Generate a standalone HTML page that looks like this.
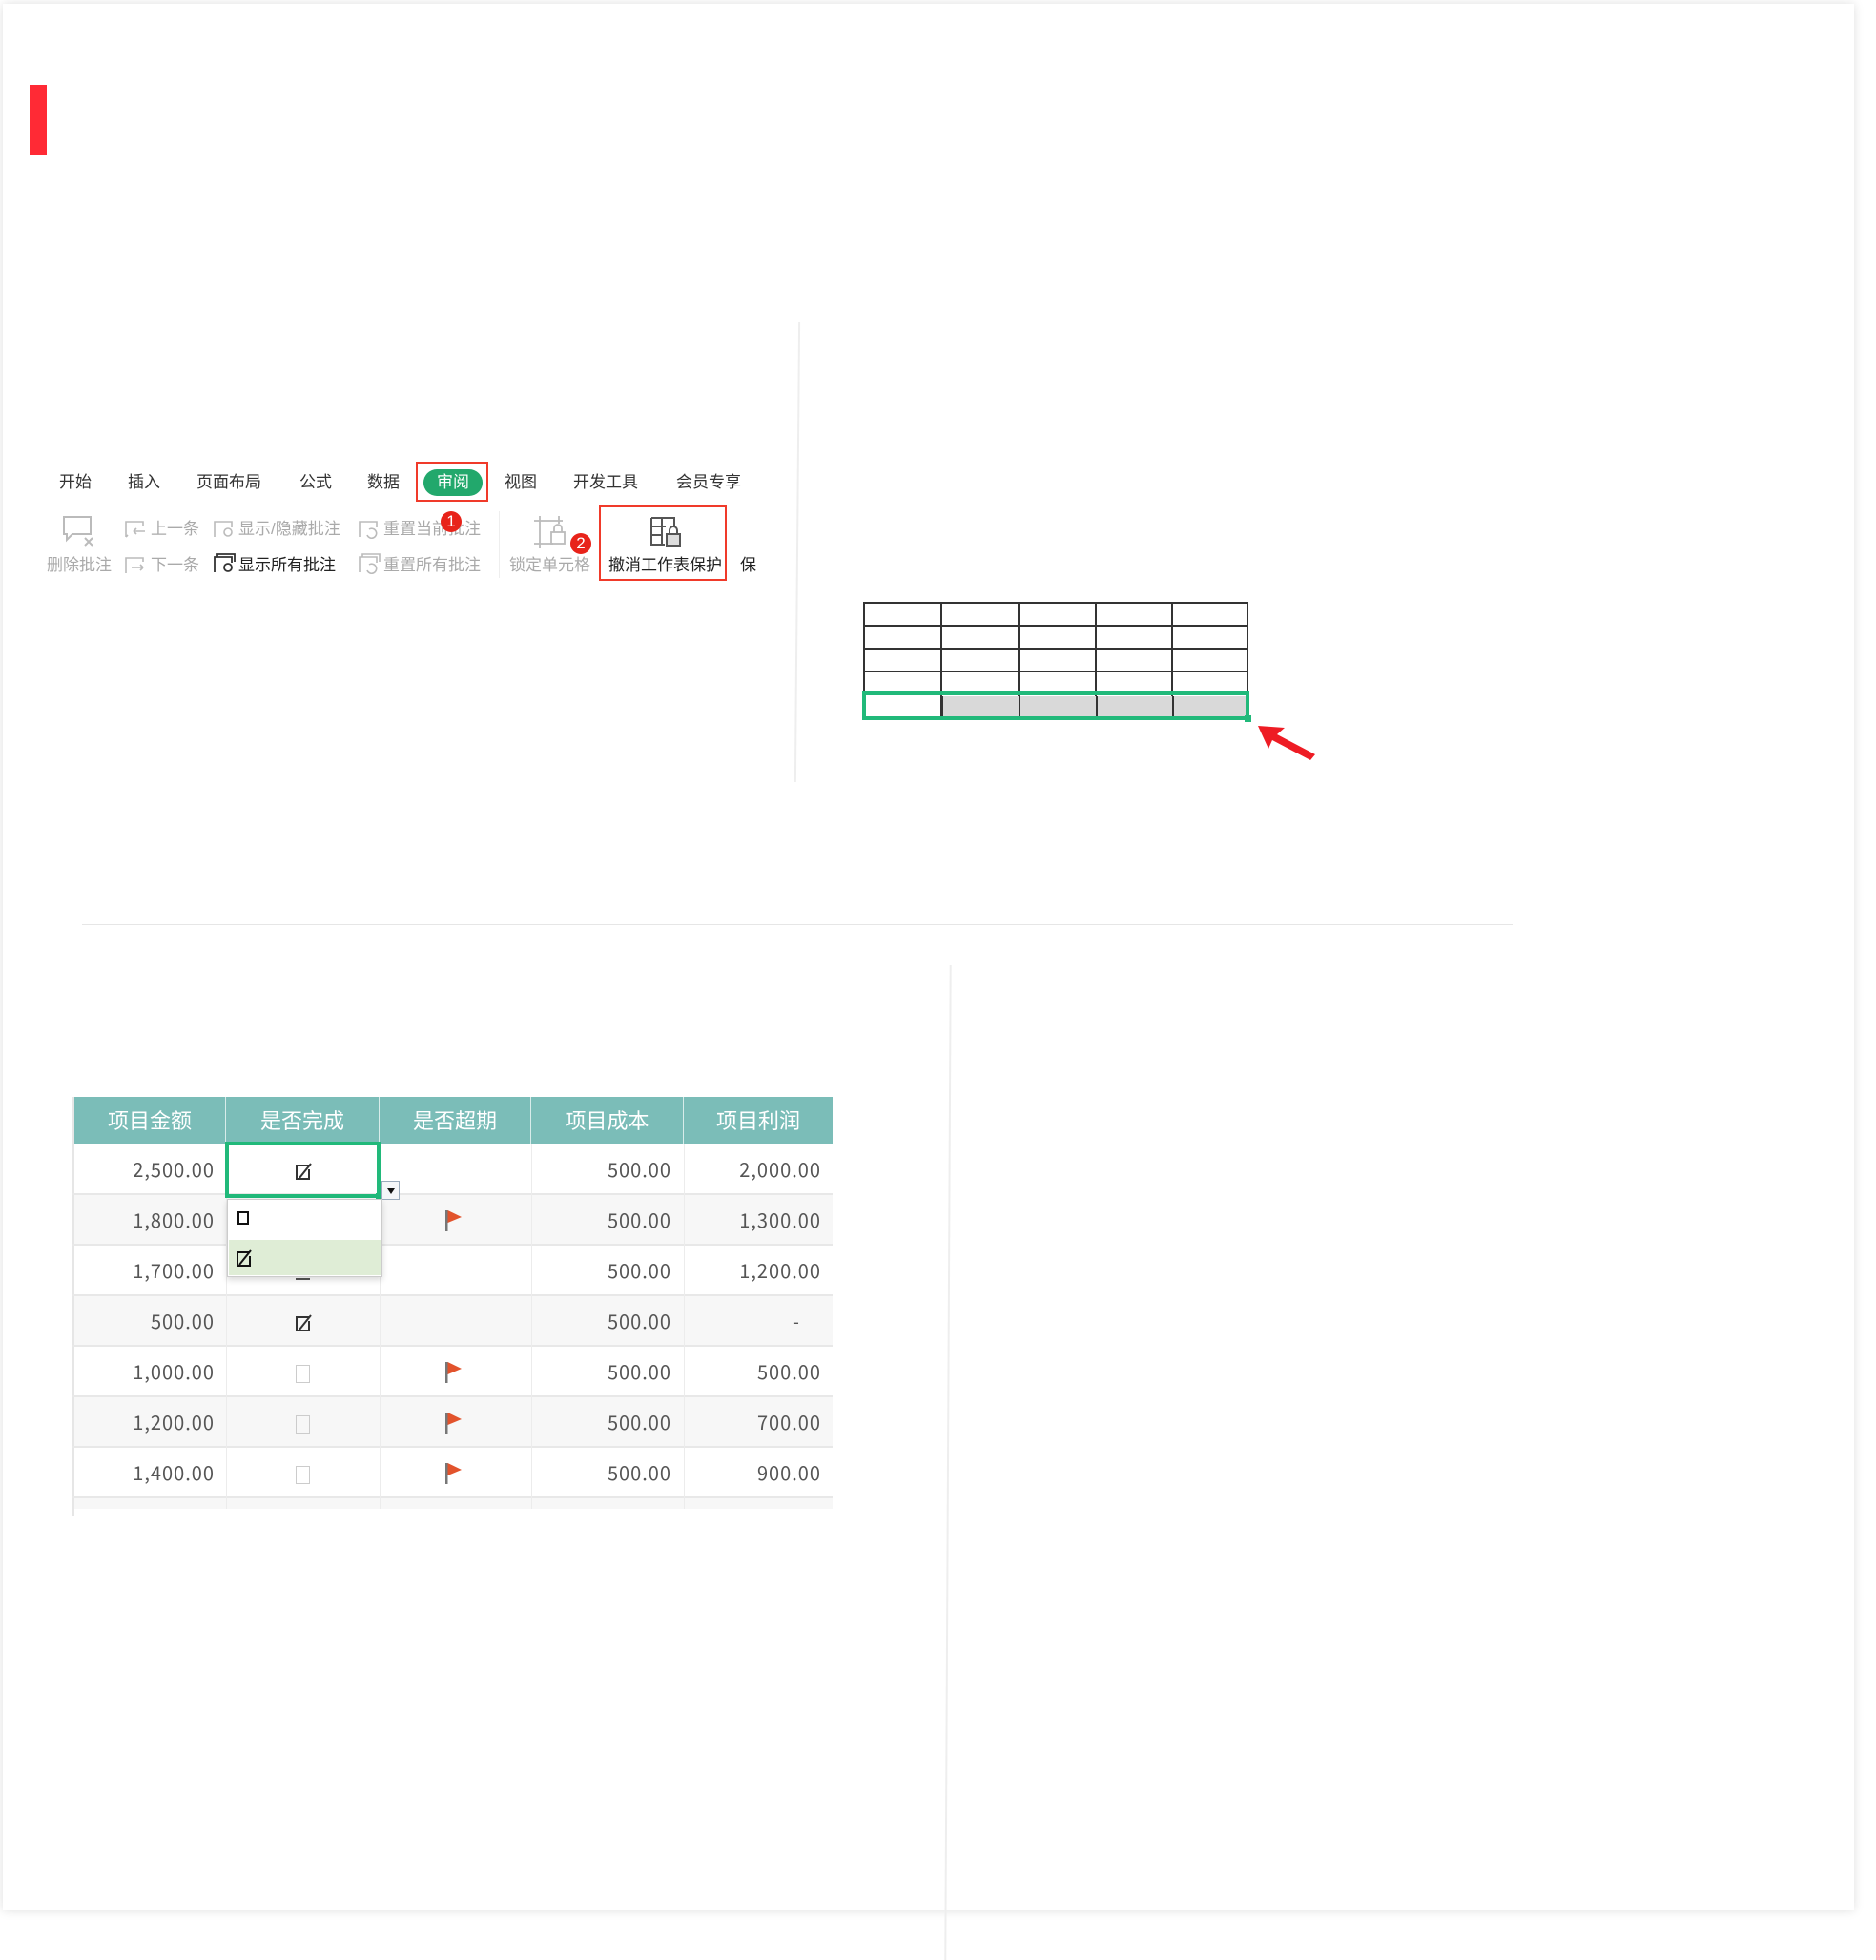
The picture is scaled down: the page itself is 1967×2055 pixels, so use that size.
<!DOCTYPE html>
<html><head><meta charset="utf-8"><style>
body{margin:0;width:1967px;height:2055px;background:#fff;position:relative;overflow:hidden;font-family:"Liberation Sans","Noto Sans CJK SC",sans-serif}
.a{position:absolute}
.card{left:3px;top:4px;width:1941px;height:1999px;background:#fff;box-shadow:0 0 10px rgba(0,0,0,.13)}
.t{position:absolute;font-size:17px;color:#333;white-space:nowrap;line-height:20px}
.g{color:#aaa}
.d{color:#222}
.th{position:absolute;top:1150px;height:49px;line-height:49px;text-align:center;color:#fff;font-size:22px;font-family:"Noto Sans CJK SC",sans-serif;border-right:1px solid #d8ecea}
.num{position:absolute;font-size:20px;color:#555;text-align:right;font-family:"Noto Sans CJK SC",sans-serif;letter-spacing:1px;line-height:53px;height:53px}
</style></head><body>
<div class="a card"></div>
<div class="a" style="left:31px;top:89px;width:18px;height:74px;background:#ff2a35"></div>
<div class="a" style="left:835px;top:338px;width:2px;height:482px;background:#eee;transform:skewX(-0.5deg)"></div>
<div class="a" style="left:86px;top:969px;width:1500px;height:1px;background:#e6e6e6"></div>
<div class="a" style="left:993px;top:1012px;width:2px;height:1043px;background:#eee;transform:skewX(-0.3deg)"></div>

<!-- ribbon tabs -->
<div class="t" style="left:62px;top:496px">开始</div>
<div class="t" style="left:134px;top:496px">插入</div>
<div class="t" style="left:206px;top:496px">页面布局</div>
<div class="t" style="left:314px;top:496px">公式</div>
<div class="t" style="left:385px;top:496px">数据</div>
<div class="a" style="left:436px;top:484px;width:76px;height:42px;border:2px solid #f03a2a;box-sizing:border-box"></div>
<div class="a" style="left:444px;top:492px;width:62px;height:28px;border-radius:14px;background:#22a86c;color:#fff;font-size:17px;line-height:28px;text-align:center">审阅</div>
<div class="t" style="left:529px;top:496px">视图</div>
<div class="t" style="left:601px;top:496px">开发工具</div>
<div class="t" style="left:709px;top:496px">会员专享</div>

<!-- ribbon buttons -->
<svg class="a" style="left:64px;top:540px" width="40" height="38" viewBox="0 0 40 38" fill="none" stroke="#bbb" stroke-width="2"><path d="M3 2h28v18H12l-6 6v-6H3z"/><path d="M25 24l8 8M33 24l-8 8"/></svg>
<div class="t g" style="left:49px;top:583px">删除批注</div>
<svg class="a" style="left:130px;top:545px" width="26" height="20" fill="none" stroke="#bbb" stroke-width="1.6"><path d="M2 18V2h18v4M4 16l-2 2M10 12h12M10 12l3-3M10 12l3 3"/></svg>
<div class="t g" style="left:158px;top:545px">上一条</div>
<svg class="a" style="left:130px;top:583px" width="26" height="20" fill="none" stroke="#bbb" stroke-width="1.6"><path d="M2 18V2h18v4M8 12h12M20 12l-3-3M20 12l-3 3"/></svg>
<div class="t g" style="left:158px;top:583px">下一条</div>
<svg class="a" style="left:223px;top:545px" width="26" height="20" fill="none" stroke="#bbb" stroke-width="1.6"><path d="M2 18V2h18v6"/><circle cx="16" cy="13" r="4"/></svg>
<div class="t g" style="left:250px;top:545px">显示/隐藏批注</div>
<svg class="a" style="left:223px;top:580px" width="26" height="22" fill="none" stroke="#333" stroke-width="1.8"><path d="M2 20V4h18v6M5 4V1h18v8"/><circle cx="16" cy="15" r="4"/></svg>
<div class="t d" style="left:250px;top:583px">显示所有批注</div>
<svg class="a" style="left:375px;top:545px" width="26" height="20" fill="none" stroke="#bbb" stroke-width="1.6"><path d="M2 18V2h18v6M10 16a5 5 0 1 0 2-6"/></svg>
<div class="t g" style="left:402px;top:545px">重置当前批注</div>
<svg class="a" style="left:375px;top:580px" width="26" height="22" fill="none" stroke="#bbb" stroke-width="1.6"><path d="M2 20V4h18v6M5 4V1h18v8M10 18a5 5 0 1 0 2-6"/></svg>
<div class="t g" style="left:402px;top:583px">重置所有批注</div>
<div class="a" style="left:523px;top:536px;width:1px;height:70px;background:#eee"></div>
<svg class="a" style="left:558px;top:540px" width="40" height="36" fill="none" stroke="#bbb" stroke-width="1.8"><path d="M2 6h30M2 30h20M8 1v34M28 1v8"/><rect x="20" y="18" width="14" height="12"/><path d="M23 18v-4a4 4 0 0 1 8 0v4"/></svg>
<div class="t g" style="left:534px;top:583px">锁定单元格</div>
<div class="a" style="left:462px;top:536px;width:22px;height:22px;border-radius:50%;background:#e8231a;color:#fff;font-size:17px;line-height:22px;text-align:center">1</div>
<div class="a" style="left:598px;top:559px;width:22px;height:22px;border-radius:50%;background:#e8231a;color:#fff;font-size:17px;line-height:22px;text-align:center">2</div>
<div class="a" style="left:628px;top:530px;width:134px;height:79px;border:2.5px solid #f03a2a;box-sizing:border-box"></div>
<svg class="a" style="left:680px;top:540px" width="38" height="36" fill="none" stroke="#555" stroke-width="2"><path d="M3 3h24v8M3 3v28h14M3 12h15M3 21h12M14 3v28"/><rect x="19" y="20" width="14" height="12" fill="#ddd"/><path d="M22 20v-4a4 4 0 0 1 8 0v4"/></svg>
<div class="t d" style="left:638px;top:583px">撤消工作表保护</div>
<div class="t d" style="left:776px;top:583px">保</div>

<!-- small table -->
<svg class="a" style="left:904px;top:630px" width="490" height="180">
<g stroke="#333" stroke-width="2" fill="none">
<rect x="2" y="2" width="402" height="122"/>
<path d="M2 26h402M2 50h402M2 74h402M2 98h402M83 2v122M164 2v122M245 2v122M325 2v122"/>
</g>
<rect x="84" y="100" width="318" height="21" fill="#d9d9d9"/>
<path d="M84 100v21M165 100v21M246 100v21M326 100v21" stroke="#333" stroke-width="2"/>
<rect x="2" y="97" width="402" height="26" fill="none" stroke="#21b97a" stroke-width="4"/>
<rect x="401" y="120" width="7" height="7" fill="#21b97a"/>
<polygon points="415,131 443,133 435,140 475,161 470,167 430,146 426,155" fill="#ee1c24"/>
</svg>

<!-- bottom table -->
<div class="a" style="left:76px;top:1150px;width:797px;height:49px;background:#7bbdb8"></div>
<div class="a" style="left:76px;top:1150px;width:2px;height:440px;background:#e6e6e6"></div>
<div class="th" style="left:78px;width:158px">项目金额</div>
<div class="th" style="left:237px;width:160px">是否完成</div>
<div class="th" style="left:398px;width:158px">是否超期</div>
<div class="th" style="left:557px;width:159px">项目成本</div>
<div class="th" style="left:717px;width:156px;border-right:0">项目利润</div>

<div class="a" style="left:78px;top:1199px;width:795px;height:391px;background:#fff"></div>
<div class="a" style="left:78px;top:1252px;width:795px;height:53px;background:#f7f7f7"></div>
<div class="a" style="left:78px;top:1358px;width:795px;height:53px;background:#f7f7f7"></div>
<div class="a" style="left:78px;top:1464px;width:795px;height:53px;background:#f7f7f7"></div>
<div class="a" style="left:78px;top:1570px;width:795px;height:12px;background:#f7f7f7"></div>
<svg class="a" style="left:76px;top:1199px" width="797" height="383"><g stroke="#e8e8e8" stroke-width="2"><path d="M0 53h797M0 106h797M0 159h797M0 212h797M0 265h797M0 318h797M0 371h797"/></g><g stroke="#ececec" stroke-width="1"><path d="M161.5 0v391M322.5 0v391M481.5 0v391M641.5 0v391"/></g></svg>

<div class="num" style="left:78px;width:147px;top:1199px">2,500.00</div>
<div class="num" style="left:78px;width:147px;top:1252px">1,800.00</div>
<div class="num" style="left:78px;width:147px;top:1305px">1,700.00</div>
<div class="num" style="left:78px;width:147px;top:1358px">500.00</div>
<div class="num" style="left:78px;width:147px;top:1411px">1,000.00</div>
<div class="num" style="left:78px;width:147px;top:1464px">1,200.00</div>
<div class="num" style="left:78px;width:147px;top:1517px">1,400.00</div>
<div class="num" style="left:557px;width:147px;top:1199px">500.00</div>
<div class="num" style="left:557px;width:147px;top:1252px">500.00</div>
<div class="num" style="left:557px;width:147px;top:1305px">500.00</div>
<div class="num" style="left:557px;width:147px;top:1358px">500.00</div>
<div class="num" style="left:557px;width:147px;top:1411px">500.00</div>
<div class="num" style="left:557px;width:147px;top:1464px">500.00</div>
<div class="num" style="left:557px;width:147px;top:1517px">500.00</div>
<div class="num" style="left:717px;width:144px;top:1199px">2,000.00</div>
<div class="num" style="left:717px;width:144px;top:1252px">1,300.00</div>
<div class="num" style="left:717px;width:144px;top:1305px">1,200.00</div>
<div class="num" style="left:717px;width:122px;top:1358px">-</div>
<div class="num" style="left:717px;width:144px;top:1411px">500.00</div>
<div class="num" style="left:717px;width:144px;top:1464px">700.00</div>
<div class="num" style="left:717px;width:144px;top:1517px">900.00</div>

<!-- checkboxes -->
<svg class="a" style="left:309px;top:1218px" width="20" height="20" fill="none" stroke="#333" stroke-width="2"><path d="M15 4H2v14h13V8"/><path d="M5 17L17 2"/></svg>
<div class="a" style="left:310px;top:1340px;width:15px;height:2px;background:#555"></div>
<svg class="a" style="left:309px;top:1377px" width="20" height="20" fill="none" stroke="#333" stroke-width="2"><path d="M15 4H2v14h13V8"/><path d="M5 17L17 2"/></svg>
<div class="a" style="left:310px;top:1431px;width:15px;height:19px;border:1px solid #ccc;box-sizing:border-box"></div>
<div class="a" style="left:310px;top:1484px;width:15px;height:19px;border:1px solid #ccc;box-sizing:border-box"></div>
<div class="a" style="left:310px;top:1537px;width:15px;height:19px;border:1px solid #ccc;box-sizing:border-box"></div>

<!-- flags -->
<svg class="a" style="left:467px;top:1268px" width="20" height="24"><rect x="0" y="1" width="2.5" height="22" fill="#777"/><path d="M2.5 1L17 8 2.5 14z" fill="#e2532c"/></svg>
<svg class="a" style="left:467px;top:1427px" width="20" height="24"><rect x="0" y="1" width="2.5" height="22" fill="#777"/><path d="M2.5 1L17 8 2.5 14z" fill="#e2532c"/></svg>
<svg class="a" style="left:467px;top:1480px" width="20" height="24"><rect x="0" y="1" width="2.5" height="22" fill="#777"/><path d="M2.5 1L17 8 2.5 14z" fill="#e2532c"/></svg>
<svg class="a" style="left:467px;top:1533px" width="20" height="24"><rect x="0" y="1" width="2.5" height="22" fill="#777"/><path d="M2.5 1L17 8 2.5 14z" fill="#e2532c"/></svg>

<!-- selection and dropdown -->
<div class="a" style="left:236px;top:1197px;width:163px;height:59px;border:4px solid #21b97a;box-sizing:border-box"></div>
<div class="a" style="left:394px;top:1251px;width:7px;height:7px;background:#21b97a"></div>
<div class="a" style="left:400px;top:1238px;width:19px;height:20px;border:1px solid #9ab;background:#f4f6f8;box-sizing:border-box"><div style="margin:7px auto 0;width:0;height:0;border-left:4px solid transparent;border-right:4px solid transparent;border-top:6px solid #111"></div></div>
<div class="a" style="left:238px;top:1257px;width:163px;height:82px;background:#fff;border:1px solid #ccc;box-sizing:border-box;box-shadow:0 3px 6px rgba(0,0,0,.15)"></div>
<div class="a" style="left:240px;top:1300px;width:159px;height:37px;background:#dfedd6"></div>
<div class="a" style="left:249px;top:1270px;width:12px;height:14px;border:2px solid #111;box-sizing:border-box"></div>
<svg class="a" style="left:247px;top:1309px" width="20" height="20" fill="none" stroke="#111" stroke-width="2"><path d="M14 4H2v14h13V8"/><path d="M4 17L16 2"/></svg>
</body></html>
